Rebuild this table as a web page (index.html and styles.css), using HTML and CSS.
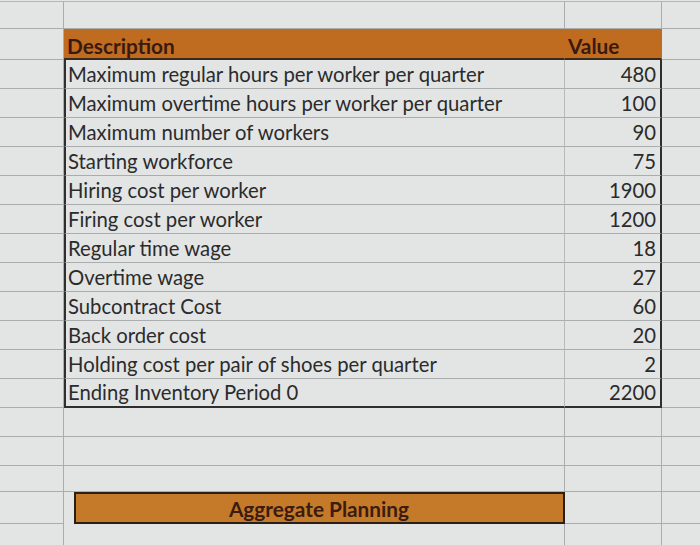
FILE: index.html
```html
<!DOCTYPE html>
<html>
<head>
<meta charset="utf-8">
<link rel="stylesheet" href="styles.css">
</head>
<body>
<div class="sheet">
  <div class="row top"><div class="c a"></div><div class="c b"></div><div class="c v"></div><div class="c d"></div></div>
  <div class="row head"><div class="c a"></div><div class="c b hb">Description</div><div class="c v hv">Value</div><div class="c d"></div></div>
  <div class="row"><div class="c a"></div><div class="c b t">Maximum regular hours per worker per quarter</div><div class="c v t">480</div><div class="c d"></div></div>
  <div class="row"><div class="c a"></div><div class="c b t">Maximum overtime hours per worker per quarter</div><div class="c v t">100</div><div class="c d"></div></div>
  <div class="row"><div class="c a"></div><div class="c b t">Maximum number of workers</div><div class="c v t">90</div><div class="c d"></div></div>
  <div class="row"><div class="c a"></div><div class="c b t">Starting workforce</div><div class="c v t">75</div><div class="c d"></div></div>
  <div class="row"><div class="c a"></div><div class="c b t">Hiring cost per worker</div><div class="c v t">1900</div><div class="c d"></div></div>
  <div class="row"><div class="c a"></div><div class="c b t">Firing cost per worker</div><div class="c v t">1200</div><div class="c d"></div></div>
  <div class="row"><div class="c a"></div><div class="c b t">Regular time wage</div><div class="c v t">18</div><div class="c d"></div></div>
  <div class="row"><div class="c a"></div><div class="c b t">Overtime wage</div><div class="c v t">27</div><div class="c d"></div></div>
  <div class="row"><div class="c a"></div><div class="c b t">Subcontract Cost</div><div class="c v t">60</div><div class="c d"></div></div>
  <div class="row"><div class="c a"></div><div class="c b t">Back order cost</div><div class="c v t">20</div><div class="c d"></div></div>
  <div class="row"><div class="c a"></div><div class="c b t">Holding cost per pair of shoes per quarter</div><div class="c v t">2</div><div class="c d"></div></div>
  <div class="row last"><div class="c a"></div><div class="c b t">Ending Inventory Period 0</div><div class="c v t">2200</div><div class="c d"></div></div>
  <div class="row"><div class="c a"></div><div class="c b"></div><div class="c v"></div><div class="c d"></div></div>
  <div class="row"><div class="c a"></div><div class="c b"></div><div class="c v"></div><div class="c d"></div></div>
  <div class="row short"><div class="c a"></div><div class="c b"></div><div class="c v"></div><div class="c d"></div></div>
  <div class="row bar"><div class="c a"></div><div class="c b barcell">Aggregate Planning</div><div class="c v"></div><div class="c d"></div></div>
  <div class="row"><div class="c a"></div><div class="c b"></div><div class="c v"></div><div class="c d"></div></div>
</div>
</body>
</html>
```
FILE: styles.css
```css
html, body {
  margin: 0;
  padding: 0;
  background: #e2e5e4;
  width: 700px;
  height: 545px;
  overflow: hidden;
}
.sheet {
  font-family: Lato, "Liberation Sans", sans-serif;
  font-size: 20.3px;
  color: #2b2b2c;
  border-top: 1px solid #b3b6b6;
  margin-top: 1px;
}
.row {
  display: grid;
  grid-template-columns: 64px 501px 97px 1fr;
  height: 29px;
}
.row.top { height: 27px; }
.row.head { height: 31px; }
.row.short { height: 26px; }
.row.bar { height: 32px; }
.c {
  border-right: 1px solid #a9adad;
  border-bottom: 1px solid #a9adad;
  display: flex;
  align-items: flex-end;
  padding: 0 4px 2px 3px;
  white-space: nowrap;
  overflow: visible;
}
.c.d { border-right: none; }
.head .b, .head .v {
  background: #c06c20;
  border-right-color: #c06c20;
  border-bottom: 2px solid #3a2a1e;
  color: #3a1a10;
  font-weight: 700;
  font-size: 20.8px;
  padding-bottom: 0;
}
.hv { padding-left: 3px; }
.t.b { border-left: 2px solid #2f2f2f; padding-left: 2px; }
.t.v {
  justify-content: flex-end;
  border-right: 2px solid #2f2f2f;
  padding-right: 4px;
}
.b.t { border-right-color: #b8bbbb; }
.last .c.t { border-bottom: 2px solid #2f2f2f; }
.barcell {
  background: #c47a28;
  border: 2px solid #2a1f18;
  margin-left: 10px;
  justify-content: center;
  font-weight: 700;
  font-size: 20.8px;
  color: #3a1c12;
  padding-bottom: 1px;
}
```
